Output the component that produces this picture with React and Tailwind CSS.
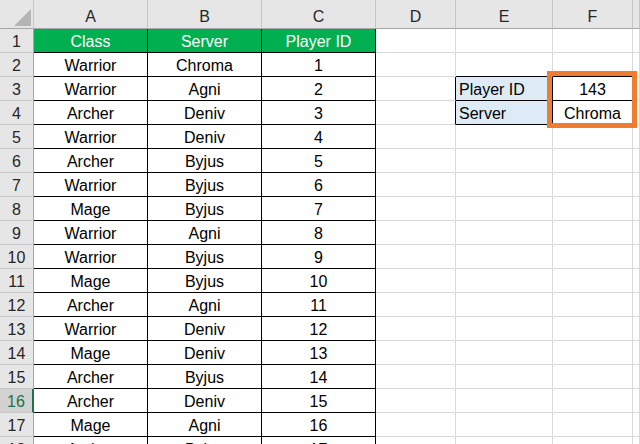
import React from "react";

const data = [
  ["Class", "Server", "Player ID"],
  ["Warrior", "Chroma", "1"],
  ["Warrior", "Agni", "2"],
  ["Archer", "Deniv", "3"],
  ["Warrior", "Deniv", "4"],
  ["Archer", "Byjus", "5"],
  ["Warrior", "Byjus", "6"],
  ["Mage", "Byjus", "7"],
  ["Warrior", "Agni", "8"],
  ["Warrior", "Byjus", "9"],
  ["Mage", "Byjus", "10"],
  ["Archer", "Agni", "11"],
  ["Warrior", "Deniv", "12"],
  ["Mage", "Deniv", "13"],
  ["Archer", "Byjus", "14"],
  ["Archer", "Deniv", "15"],
  ["Mage", "Agni", "16"],
  ["Archer", "Byjus", "17"],
];

const colW = ["w-[114px]", "w-[114px]", "w-[114px]", "w-[80px]", "w-[97px]", "w-[80px]", "flex-1"];
const letters = ["A", "B", "C", "D", "E", "F", ""];

function cellText(r, c) {
  if (c <= 2) return data[r - 1][c];
  if (r === 3 && c === 4) return "Player ID";
  if (r === 4 && c === 4) return "Server";
  if (r === 3 && c === 5) return "143";
  if (r === 4 && c === 5) return "Chroma";
  return "";
}

function cellClass(r, c) {
  const inSide = (r === 3 || r === 4) && (c === 4 || c === 5);
  const rightBlack = c <= 2 || ((r === 3 || r === 4) && c >= 3 && c <= 5);
  const bottomBlack = c <= 2 || ((c === 4 || c === 5) && r >= 2 && r <= 4);
  let cls = "h-full shrink-0 flex items-center pt-[3px] border-r border-b overflow-hidden whitespace-nowrap " + colW[c];
  cls += rightBlack ? " border-r-black" : " border-r-[#d9d9d9]";
  cls += bottomBlack ? " border-b-black" : " border-b-[#d9d9d9]";
  if (r === 1 && c <= 2) cls += " bg-[#00b050] text-white";
  else if (inSide && c === 4) cls += " bg-[#ddebf7] text-black";
  else cls += " bg-white text-black";
  cls += c === 4 ? " justify-start pl-[3px]" : " justify-center";
  return cls;
}

export default function App() {
  return (
    <div className="relative w-[640px] h-[444px] overflow-hidden bg-white font-['Liberation_Sans',Arial,sans-serif] text-[16px] leading-none">
      <div className="flex h-[29px]">
        <div className="relative w-[34px] h-full shrink-0 bg-[#e6e6e6] border-r border-r-[#c6c6c6] border-b border-b-[#a6a6a6]">
          <svg className="absolute left-[14px] top-[9px]" width="17" height="17" viewBox="0 0 17 17">
            <polygon points="17,0 17,17 0,17" fill="#b5b5b5" />
          </svg>
        </div>
        {letters.map((l, i) => (
          <div
            key={i}
            className={"h-full shrink-0 flex items-center justify-center pt-[5px] bg-[#e6e6e6] text-[#262626] border-r border-r-[#c6c6c6] border-b border-b-[#a6a6a6] " + colW[i]}
          >
            {l}
          </div>
        ))}
      </div>
      {data.map((_, idx) => {
        const r = idx + 1;
        const active = r === 16;
        return (
          <div key={r} className="flex h-[24px]">
            <div
              className={
                active
                  ? "w-[34px] h-full shrink-0 flex items-center justify-center pt-[3px] bg-[#d2d2d2] text-[#217346] border-r-2 border-r-[#217346] border-b border-b-[#c6c6c6]"
                  : "w-[34px] h-full shrink-0 flex items-center justify-center pt-[3px] bg-[#e6e6e6] text-[#262626] border-r border-r-[#a6a6a6] border-b border-b-[#c6c6c6]"
              }
            >
              {r}
            </div>
            {colW.map((_, c) => (
              <div key={c} className={cellClass(r, c)}>
                {cellText(r, c)}
              </div>
            ))}
          </div>
        );
      })}
      <div className="absolute left-[547px] top-[71px] w-[90px] h-[57px] border-[5px] border-[#ed7d31]" />
    </div>
  );
}
